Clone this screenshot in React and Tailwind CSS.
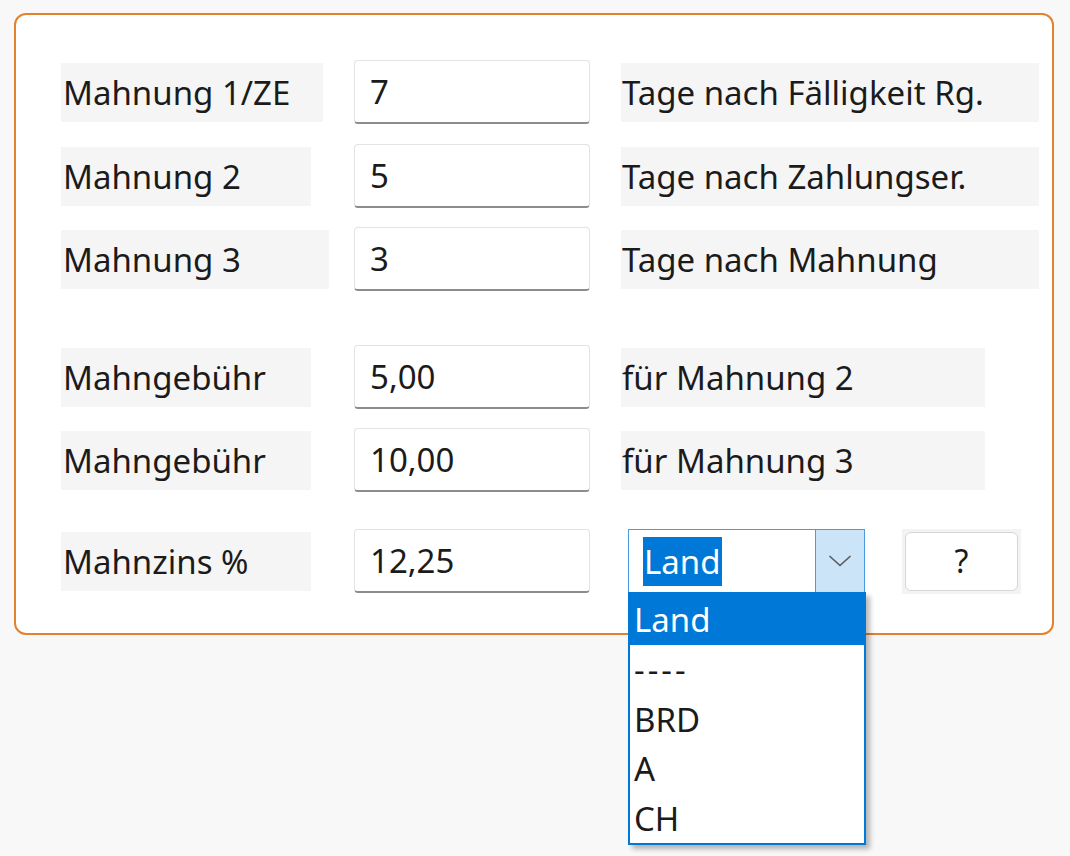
import React from "react";

const font = { fontFamily: '"Noto Sans", "Open Sans", sans-serif' };

function Label({ children, w }) {
  return (
    <div className={`h-[59px] ${w} bg-[#f5f5f5] flex items-center pl-[2px] text-[33px] text-[#1b1b1b] leading-none whitespace-nowrap`}>
      {children}
    </div>
  );
}

function Field({ value }) {
  return (
    <div className="h-[64px] w-[236px] bg-white border border-[#e3e3e3] border-b-[2px] border-b-[#8c8c8c] rounded-[4px] flex items-center pl-[15px] text-[33px] text-[#1b1b1b] leading-none">
      {value}
    </div>
  );
}

function Row({ label, lw, value, right, rw, className = "" }) {
  return (
    <div className={`flex items-center h-[64px] ${className}`}>
      <div className="w-[293px] shrink-0">
        <Label w={lw}>{label}</Label>
      </div>
      <div className="w-[267px] shrink-0">
        <Field value={value} />
      </div>
      <div className="shrink-0">
        <div className={`h-[59px] ${rw} bg-[#f5f5f5] flex items-center pl-[1px] text-[33px] text-[#1b1b1b] leading-none whitespace-nowrap`}>
          {right}
        </div>
      </div>
    </div>
  );
}

export default function App() {
  return (
    <div className="w-[1070px] h-[856px] bg-[#f8f8f8] pt-[13px] pl-[14px]" style={font}>
      <div className="w-[1040px] h-[622px] bg-white border-2 border-[#e3812d] rounded-[12px] pt-[45px] pl-[45px]">
        <Row label="Mahnung 1/ZE" lw="w-[262px]" value="7" right="Tage nach Fälligkeit Rg." rw="w-[418px]" />
        <Row label="Mahnung 2" lw="w-[250px]" value="5" right="Tage nach Zahlungser." rw="w-[418px]" className="mt-[20px]" />
        <Row label="Mahnung 3" lw="w-[268px]" value="3" right="Tage nach Mahnung" rw="w-[418px]" className="mt-[19px]" />
        <Row label="Mahngebühr" lw="w-[250px]" value="5,00" right="für Mahnung 2" rw="w-[364px]" className="mt-[54px]" />
        <Row label="Mahngebühr" lw="w-[250px]" value="10,00" right="für Mahnung 3" rw="w-[364px]" className="mt-[19px]" />
        <div className="flex items-center h-[64px] mt-[37px]">
          <div className="w-[293px] shrink-0">
            <Label w="w-[250px]">Mahnzins %</Label>
          </div>
          <div className="w-[274px] shrink-0">
            <Field value="12,25" />
          </div>
          <div className="relative w-[237px] h-[64px] shrink-0 border border-[#4a9be0] bg-white flex">
            <div className="flex-1 flex items-center pl-[14px]">
              <span className="bg-[#0078d7] text-white text-[33px] leading-none px-[1px] py-[8px]">Land</span>
            </div>
            <div className="w-[49px] bg-[#cce4f7] border-l border-[#4a9be0] flex items-center justify-center">
              <svg width="24" height="12" viewBox="0 0 24 12" fill="none">
                <path d="M1.5 1 L12 10.5 L22.5 1" stroke="#5a5a5a" strokeWidth="1.6" />
              </svg>
            </div>
            <div className="absolute left-[-1px] top-[62px] w-[238px] h-[253px] bg-white border-2 border-[#0078d7] shadow-[4px_4px_5px_rgba(0,0,0,0.28)] z-10 flex flex-col text-[33px] leading-none text-[#1b1b1b]">
              <div className="h-[51px] bg-[#0078d7] text-white flex items-center pl-[4px]">Land</div>
              <div className="h-[50px] flex items-center pl-[4px] tracking-[3px]">----</div>
              <div className="h-[50px] flex items-center pl-[4px]">BRD</div>
              <div className="h-[50px] flex items-center pl-[4px]">A</div>
              <div className="h-[50px] flex items-center pl-[4px]">CH</div>
            </div>
          </div>
          <div className="ml-[37px] w-[119px] h-[65px] bg-[#f3f3f3] flex items-center justify-center shrink-0">
            <div className="w-[113px] h-[59px] bg-white border border-[#d6d6d6] rounded-[6px] flex items-center justify-center text-[32px] leading-none text-[#1b1b1b]">
              ?
            </div>
          </div>
        </div>
      </div>
    </div>
  );
}
